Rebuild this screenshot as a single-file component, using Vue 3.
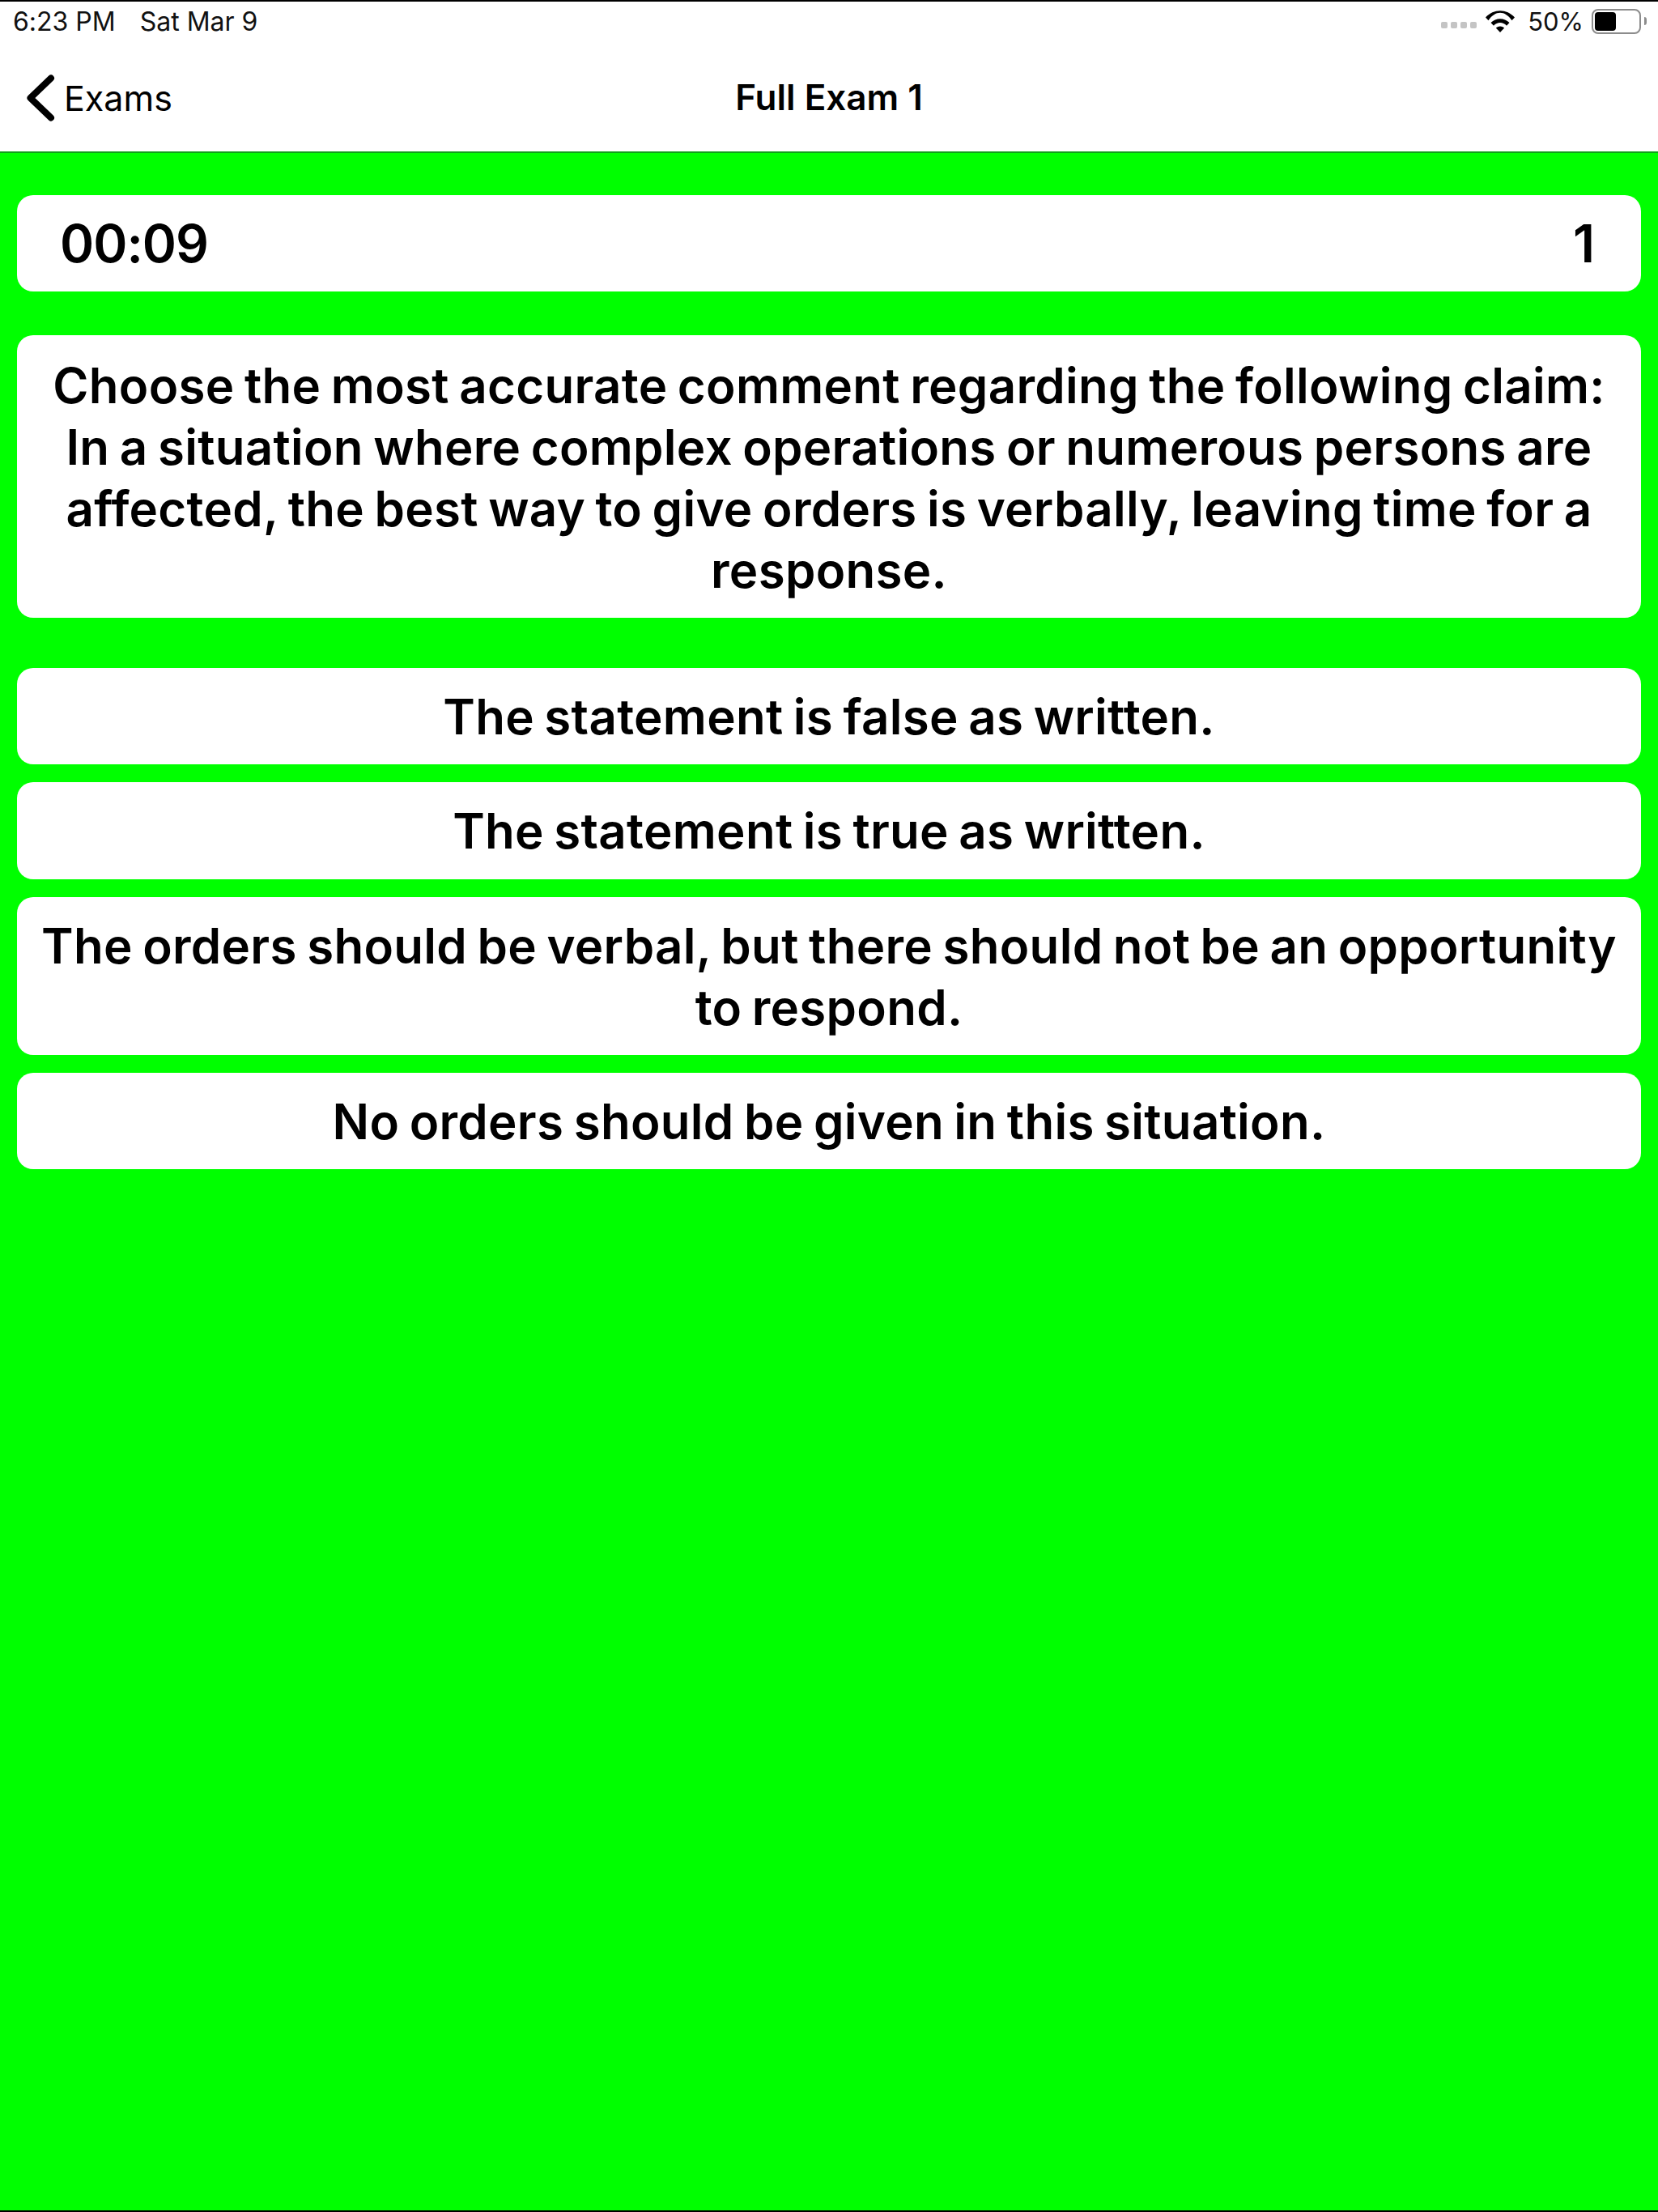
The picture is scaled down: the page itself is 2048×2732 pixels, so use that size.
<template>
  <div class="screen">
    <header class="top">
      <div class="status-bar">
        <div class="status-left">
          <span>6:23 PM</span>
          <span>Sat Mar 9</span>
        </div>
        <div class="status-right">
          <span class="signal"><i></i><i></i><i></i><i></i></span>
          <svg class="wifi" width="36" height="27" viewBox="0 0 36 27">
            <path d="M0 8.500C10-2.500 26-2.500 36 8.500l-3.500 3.700C24-.5 12-.5 3.500 12.200z"/>
            <path d="M6.500 15C13 8.500 23 8.500 29.500 15L26 18.700C21.500 13.800 14.500 13.800 10 18.700z"/>
            <path d="M12.800 21.500c3-2.700 7.400-2.700 10.400 0L18 27z"/>
          </svg>
          <span class="percent">50%</span>
          <span class="battery"><span class="battery-fill"></span></span>
          <span class="battery-tip"></span>
        </div>
      </div>
      <nav class="nav-bar">
        <div class="back">
          <svg width="36" height="58" viewBox="0 0 36 58" fill="none" stroke="#000" stroke-width="8" stroke-linecap="round" stroke-linejoin="round">
            <path d="M30 4.500L4.500 29L30 53.500"/>
          </svg>
          <span>Exams</span>
        </div>
        <div class="nav-title">Full Exam 1</div>
      </nav>
    </header>
    <main class="content">
      <div class="card timer-row">
        <span>{{ time }}</span>
        <span class="count">{{ number }}</span>
      </div>
      <div class="card question">{{ question }}</div>
      <div class="answers">
        <div v-for="a in answers" :key="a" class="card answer">{{ a }}</div>
      </div>
    </main>
  </div>
</template>

<script setup>
const time = '00:09'
const number = 1
const question = 'Choose the most accurate comment regarding the following claim: In a situation where complex operations or numerous persons are affected, the best way to give orders is verbally, leaving time for a response.'
const answers = [
  'The statement is false as written.',
  'The statement is true as written.',
  'The orders should be verbal, but there should not be an opportunity to respond.',
  'No orders should be given in this situation.',
]
</script>

<style>
html, body { margin: 0; background: #00ff00; }
</style>

<style scoped>
.screen {
  width: 2048px;
  height: 2732px;
  box-sizing: border-box;
  display: flex;
  flex-direction: column;
  border-top: 2px solid #000;
  border-bottom: 2px solid #000;
  background: #00ff00;
  color: #000;
  font-family: Inter, "Liberation Sans", sans-serif;
  font-variant-ligatures: none;
  overflow: hidden;
}
.top {
  background: #fff;
  border-bottom: 2px solid #0fa01a;
}
.status-bar {
  height: 48px;
  padding: 0 14px 0 16px;
  display: flex;
  justify-content: space-between;
  align-items: center;
  font-size: 32px;
  color: #111;
}
.status-left { display: flex; gap: 30px; }
.status-right { display: flex; align-items: center; }
.signal { display: flex; gap: 4px; margin-right: 11px; margin-top: 10px; }
.signal i { width: 8px; height: 8px; border-radius: 2px; background: #c4c4c4; }
.wifi { fill: #000; margin-right: 16px; }
.percent { font-size: 31px; }
.battery {
  width: 61px;
  height: 31px;
  box-sizing: border-box;
  margin-left: 10px;
  padding: 2px;
  border: 2px solid #8c8c8c;
  border-radius: 8px;
  display: flex;
}
.battery-fill { width: 26px; background: #000; border-radius: 4px; }
.battery-tip {
  width: 3px;
  height: 10px;
  margin-left: 4px;
  background: #8c8c8c;
  border-radius: 0 3px 3px 0;
}
.nav-bar {
  height: 137px;
  position: relative;
  display: flex;
  align-items: center;
  justify-content: center;
}
.back {
  position: absolute;
  left: 33px;
  top: 42px;
  display: flex;
  align-items: center;
  gap: 10px;
  font-size: 43px;
}
.nav-title { font-size: 44px; font-weight: 600; padding-top: 2px; }
.content {
  flex: 1;
  padding: 52px 21px 0;
  display: flex;
  flex-direction: column;
}
.card {
  background: #fff;
  border-radius: 20px;
  font-size: 60px;
  font-weight: 600;
  line-height: 76px;
  text-align: center;
  letter-spacing: 0.3px;
  word-spacing: -3px;
}
.timer-row {
  height: 119px;
  padding: 0 58px 0 53px;
  box-sizing: border-box;
  display: flex;
  justify-content: space-between;
  align-items: center;
  font-size: 64px;
  font-weight: 560;
  letter-spacing: -1px;
  word-spacing: 0;
}
.count { font-weight: 600; }
.question {
  margin-top: 54px;
  padding: 24px 30px 21px;
}
.answers {
  margin-top: 62px;
  display: flex;
  flex-direction: column;
  gap: 22px;
}
.answer { padding: 22px 20px 21.250px; }
</style>
